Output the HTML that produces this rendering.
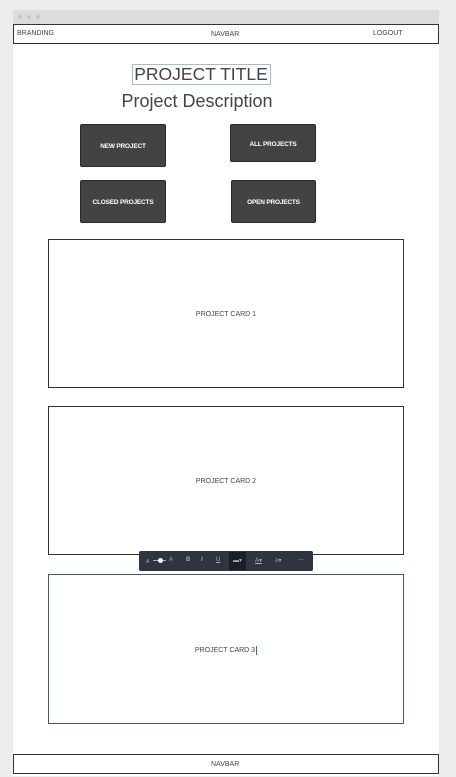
<!DOCTYPE html>
<html><head><style>
body{margin:0;width:456px;height:777px;background:#ececec;font-family:"Liberation Sans",sans-serif;position:relative;overflow:hidden}
.a{position:absolute}
.frame{left:13px;top:10px;width:426px;height:766px;background:#fff}
.tb{left:13px;top:10px;width:426px;height:14px;background:#dcdcdc}
.dot{width:4px;height:4px;border-radius:50%;background:#c8c8c8;top:15px}
.nav{border:1px solid #333;background:#fff;box-sizing:border-box;font-size:7px;color:#444}
.btn{background:#434343;border:1px solid #2a2a2a;border-radius:2px;box-sizing:border-box;color:#fff;font-size:6.5px;font-weight:bold;display:flex;align-items:center;justify-content:center;letter-spacing:-0.2px;padding-top:2px}
.card{border:1px solid #333;box-sizing:border-box;background:#fff;display:flex;align-items:center;justify-content:center;font-size:7px;color:#444;padding-top:2px}
.t{color:#aaa;font-size:6px;top:557px}
</style></head><body>
<div class="a frame"></div>
<div class="a tb"></div>
<div class="a dot" style="left:18px"></div><div class="a dot" style="left:27px"></div><div class="a dot" style="left:36px"></div>
<div class="a nav" style="left:13px;top:24px;width:426px;height:20px">
<span class="a" style="left:3px;top:5px">BRANDING</span>
<span class="a" style="left:197px;top:6px">NAVBAR</span>
<span class="a" style="left:359px;top:5px">LOGOUT</span></div>
<div class="a" style="left:132px;top:64px;width:139px;height:21px;border:1px solid #9bbcf0;box-sizing:border-box"></div>
<div class="a" style="left:130px;top:64px;width:142px;text-align:center;font-size:17.5px;color:#444">PROJECT TITLE</div>
<div class="a" style="left:96px;top:91px;width:202px;text-align:center;font-size:18px;color:#444">Project Description</div>
<div class="a btn" style="left:80px;top:124px;width:86px;height:43px">NEW PROJECT</div>
<div class="a btn" style="left:230px;top:124px;width:86px;height:38px">ALL PROJECTS</div>
<div class="a btn" style="left:80px;top:180px;width:86px;height:43px">CLOSED PROJECTS</div>
<div class="a btn" style="left:231px;top:180px;width:85px;height:43px">OPEN PROJECTS</div>
<div class="a card" style="left:48px;top:239px;width:356px;height:149px">PROJECT CARD 1</div>
<div class="a card" style="left:48px;top:406px;width:356px;height:149px">PROJECT CARD 2</div>
<div class="a card" style="left:48px;top:574px;width:356px;height:150px;border-color:#3d5a8f">PROJECT CARD 3<span style="display:inline-block;width:1px;height:9px;background:#36c;margin-left:1px"></span></div>
<div class="a" style="left:139px;top:551px;width:174px;height:20px;background:#2f3540;border-radius:2px"></div>
<div class="a" style="left:229px;top:552px;width:17px;height:18px;background:#1a1e25"></div>
<span class="a t" style="left:146px;top:559px;font-size:5px">A</span>
<div class="a" style="left:153px;top:560px;width:13px;height:1px;background:#aaa"></div>
<div class="a" style="left:158px;top:558px;width:5px;height:5px;border-radius:50%;background:#fff"></div>
<span class="a t" style="left:169px">A</span>
<span class="a t" style="left:186px;font-weight:bold">B</span>
<span class="a t" style="left:201px;font-style:italic;font-weight:bold">I</span>
<span class="a t" style="left:216px;text-decoration:underline">U</span>
<span class="a t" style="left:233px">▬▾</span>
<span class="a t" style="left:255px;text-decoration:underline">A▾</span>
<span class="a t" style="left:275px">≡▾</span>
<span class="a t" style="left:298px;color:#ddd">···</span>
<div class="a nav" style="left:13px;top:754px;width:426px;height:20px"><span class="a" style="left:197px;top:6px">NAVBAR</span></div>
</body></html>
